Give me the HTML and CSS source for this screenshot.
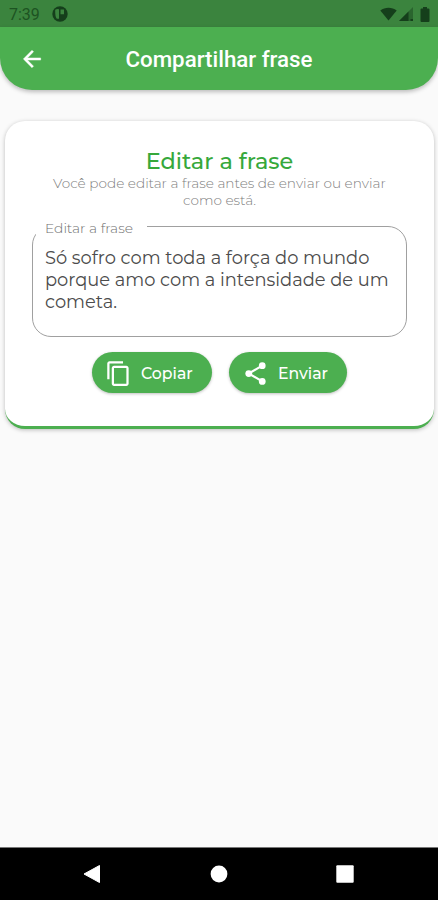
FILE: index.html
```html
<!DOCTYPE html>
<html lang="pt-BR">

<head>
  <meta charset="UTF-8">
  <meta name="viewport" content="width=device-width, initial-scale=1.0">
  <title>Compartilhar frase</title>
  <link rel="stylesheet" href="styles.css">
</head>

<body>
  <div class="status-bar">
    <span class="clock">7:39</span>
    <svg class="status-app" width="16" height="16" viewBox="0 0 16 16">
      <circle cx="8" cy="8" r="7.7" fill="#153f1b"/>
      <path d="M3.200 3.800Q5 2.600 7 3.200V12.800H4.800Q3 11 3.200 3.800zM8.500 3.400H12V8.200H8.500z" fill="#3b843e"/>
    </svg>
    <div class="status-icons">
      <svg width="17" height="14" viewBox="0 0 17 14">
        <path d="M.3 3.500C5-.3 12-.3 16.700 3.500L8.500 13.500z" fill="#153f1b"/>
      </svg>
      <svg width="14" height="14" viewBox="0 0 14 14">
        <path d="M0 14L14 0v14z" fill="#2a652e"/>
        <path d="M0 14L9.500 4.500V14zM11.500 12h2.500v2h-2.500z" fill="#153f1b"/>
      </svg>
      <svg class="battery" width="10" height="15" viewBox="0 0 10 15">
        <path d="M3 0h4v1.500h1.500q1 0 1 1V14q0 1-1 1h-7q-1 0-1-1V2.500q0-1 1-1H3z" fill="#153f1b"/>
      </svg>
    </div>
  </div>

  <header class="app-bar">
    <a class="back" href="#" aria-label="Voltar">
      <svg width="26" height="26" viewBox="0 0 24 24">
        <path d="M20 11H7.830l5.590-5.590L12 4l-8 8 8 8 1.410-1.410L7.830 13H20z" fill="#fff" stroke="#fff" stroke-width=".4"/>
      </svg>
    </a>
    <h1>Compartilhar frase</h1>
  </header>

  <main>
    <section class="card">
      <h2>Editar a frase</h2>
      <p class="hint">Você pode editar a frase antes de enviar ou enviar<br>como está.</p>
      <div class="field">
        <span class="field-label">Editar a frase</span>
        <p class="field-text">Só sofro com toda a força do mundo<br>porque amo com a intensidade de um<br>cometa.</p>
      </div>
      <div class="actions">
        <button class="btn btn-copy">
          <svg width="27" height="27" viewBox="0 0 24 24">
            <path d="M16 1H4c-1.100 0-2 .9-2 2v14h2V3h12V1zm3 4H8c-1.100 0-2 .9-2 2v14c0 1.100.9 2 2 2h11c1.100 0 2-.9 2-2V7c0-1.100-.9-2-2-2zm0 16H8V7h11v14z" fill="#fff"/>
          </svg>
          <span>Copiar</span>
        </button>
        <button class="btn btn-send">
          <svg width="27" height="27" viewBox="0 0 24 24">
            <path d="M18 5L6 12l12 7" fill="none" stroke="#fff" stroke-width="2"/>
            <circle cx="18" cy="5" r="3" fill="#fff"/>
            <circle cx="6" cy="12" r="3" fill="#fff"/>
            <circle cx="18" cy="19" r="3" fill="#fff"/>
          </svg>
          <span>Enviar</span>
        </button>
      </div>
    </section>
  </main>

  <nav class="nav-bar">
    <svg width="18" height="20" viewBox="0 0 18 20">
      <path d="M1 10L16.500 1.500v17z" fill="#fff" stroke="#fff" stroke-linejoin="round"/>
    </svg>
    <svg width="18" height="18" viewBox="0 0 18 18">
      <circle cx="9" cy="9" r="8.400" fill="#fff"/>
    </svg>
    <svg width="18" height="18" viewBox="0 0 18 18">
      <rect x=".3" y=".3" width="17.400" height="17.400" rx="1" fill="#fff"/>
    </svg>
  </nav>
</body>

</html>
```
FILE: styles.css
```css
* {
  box-sizing: border-box;
}

body {
  margin: 0;
  height: 900px;
  display: flex;
  flex-direction: column;
  background-color: #fafafa;
  font-family: Montserrat, Inter, sans-serif;
  overflow: hidden;
}

h1, h2, p {
  margin: 0;
}

svg {
  display: block;
  flex: none;
}

/* status bar */
.status-bar {
  height: 27px;
  padding: 1px 8px 0 9px;
  display: flex;
  align-items: center;
  background-color: #3b843e;
  color: #1d5322;
  font: 16px Roboto, sans-serif;
}

.status-app {
  margin-left: 12px;
}

.status-icons {
  margin-left: auto;
  display: flex;
  align-items: center;
  gap: 2px;
}

.battery {
  margin-left: 5px;
}

/* app bar */
.app-bar {
  height: 63px;
  padding: 0 19px;
  display: grid;
  grid-template-columns: 26px 1fr 26px;
  align-items: center;
  background-color: #4caf50;
  border-radius: 0 0 32px 32px;
  box-shadow: 0 2px 4px rgba(0, 0, 0, 0.25);
}

.app-bar h1 {
  color: #fff;
  font: 500 22.3px/28px Roboto, sans-serif;
  text-align: center;
  white-space: nowrap;
}

main {
  flex: 1;
  padding: 31px 4px 0 5px;
}

/* card */
.card {
  height: 308px;
  padding: 27px 27px 0;
  background-color: #fff;
  border-bottom: 3px solid #4caf50;
  border-radius: 20px;
  box-shadow: 0 1px 4px rgba(0, 0, 0, 0.25);
}

.card h2 {
  color: #36a83b;
  font-size: 22.4px;
  font-weight: 500;
  line-height: 27px;
  text-align: center;
}

.hint {
  color: #808080;
  font-size: 13.65px;
  font-weight: 300;
  line-height: 17px;
  text-align: center;
  white-space: nowrap;
}

.field {
  position: relative;
  height: 111px;
  margin-top: 17px;
  padding: 20px 12px;
  border: 1px solid #a0a0a0;
  border-radius: 19px;
}

/* label sits over the top border */
.field-label {
  position: absolute;
  top: -8px;
  left: 3px;
  width: 111px;
  padding-left: 9px;
  background-color: #fff;
  color: #707070;
  font-size: 13.8px;
  font-weight: 300;
  line-height: 18px;
}

.field-text {
  color: #4c4c4c;
  font-size: 17.85px;
  font-weight: 400;
  line-height: 22px;
  white-space: nowrap;
}

.actions {
  display: flex;
  justify-content: center;
  gap: 17px;
  margin-top: 15px;
}

.btn {
  height: 41px;
  padding: 1px 0 0 13px;
  display: flex;
  align-items: center;
  gap: 9px;
  border: none;
  border-radius: 21px;
  background-color: #4caf50;
  box-shadow: 0 1px 3px rgba(0, 0, 0, 0.25);
  color: #fff;
  font-family: inherit;
  font-size: 15.7px;
  font-weight: 500;
}

.btn span {
  padding-top: 1px;
}

.btn-copy {
  width: 120px;
}

.btn-send {
  width: 118px;
}

/* system navigation */
.nav-bar {
  height: 53px;
  padding: 0 84px 0 83px;
  display: flex;
  justify-content: space-between;
  align-items: center;
  border-top: 1px solid #777;
  background-color: #000;
}
```
